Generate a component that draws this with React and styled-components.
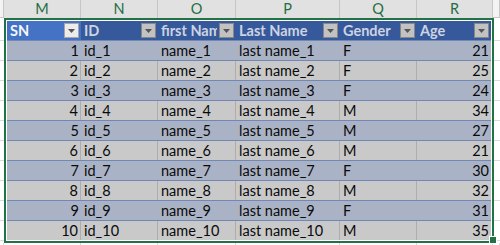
import React from 'react';
import styled, { createGlobalStyle } from 'styled-components';

const Global = createGlobalStyle`
  html, body { margin: 0; padding: 0; background: #ffffff; }
  body {
    width: 500px; height: 245px; overflow: hidden;
    font-family: Lato, "Open Sans", "Liberation Sans", sans-serif;
    font-size: 14px; color: #000;
  }
`;

const SHEET_COLS = [
  { letter: 'M', w: 77 },
  { letter: 'N', w: 77 },
  { letter: 'O', w: 78 },
  { letter: 'P', w: 104 },
  { letter: 'Q', w: 77 },
  { letter: 'R', w: 76 },
];

const FIELDS = [
  { label: 'SN', key: 'sn', right: true },
  { label: 'ID', key: 'id' },
  { label: 'first Name', key: 'first' },
  { label: 'Last Name', key: 'last' },
  { label: 'Gender', key: 'gender' },
  { label: 'Age', key: 'age', right: true },
];

const genders = ['F', 'F', 'F', 'M', 'M', 'M', 'F', 'M', 'F', 'M'];
const ages = [21, 25, 24, 34, 27, 21, 30, 32, 31, 35];
const ROWS = genders.map((g, i) => ({
  sn: i + 1,
  id: `id_${i + 1}`,
  first: `name_${i + 1}`,
  last: `last name_${i + 1}`,
  gender: g,
  age: ages[i],
}));

const TABLE_TEMPLATE = '74px 77px 78px 104px 77px 74px';
const SHEET_TEMPLATE = `4px ${SHEET_COLS.map((c) => c.w + 'px').join(' ')} 1fr`;

const Page = styled.div`
  display: flex;
  flex-direction: column;
  width: 500px;
  height: 245px;
`;

const ColHeaderRow = styled.div`
  display: grid;
  grid-template-columns: ${SHEET_TEMPLATE};
  height: 18px;
  flex: none;
`;

const ColHeaderCell = styled.div`
  box-sizing: border-box;
  height: 18px;
  display: flex;
  align-items: center;
  justify-content: center;
  background: ${(p) => (p.$selected ? '#e1e1e1' : '#f3f3f3')};
  border-right: 1px solid #c6c6c6;
  border-bottom: ${(p) => (p.$selected ? 'none' : '1px solid #c6c6c6')};
  color: #1f6e43;
  font-size: 14.5px;
  line-height: 18px;
`;

const Body = styled.div`
  display: flex;
  flex: none;
`;

const Gutter = styled.div`
  flex: ${(p) => (p.$grow ? '1' : 'none')};
  width: ${(p) => (p.$grow ? 'auto' : '4px')};
  background-image: repeating-linear-gradient(
    to bottom,
    transparent 0 19px,
    #dadada 19px 20px
  );
  background-position: 0 3px;
`;

const Selection = styled.div`
  position: relative;
  flex: none;
  width: 490px;
  box-sizing: border-box;
  border: 2px solid #217346;
  padding: 1px;
  background: #ffffff;
`;

const Handle = styled.div`
  position: absolute;
  right: -5px;
  bottom: -3px;
  width: 6px;
  height: 6px;
  background: #217346;
  border: 1px solid #ffffff;
  z-index: 2;
`;

const HeadRow = styled.div`
  display: grid;
  grid-template-columns: ${TABLE_TEMPLATE};
  height: 19px;
`;

const HeadCell = styled.div`
  display: flex;
  align-items: center;
  gap: 2px;
  min-width: 0;
  padding: 0 2px 0 3px;
  background: ${(p) => (p.$active ? '#4472c4' : '#36599b')};
  color: ${(p) => (p.$active ? '#f4f6fb' : '#cdd3e1')};
  font-weight: 700;
  font-size: 14.5px;
`;

const HeadText = styled.span`
  flex: 1;
  min-width: 0;
  overflow: hidden;
  white-space: nowrap;
  line-height: 19px;
`;

const DropButton = styled.span`
  flex: none;
  width: 15px;
  height: 15px;
  box-sizing: border-box;
  display: flex;
  align-items: center;
  justify-content: center;
  border: 1px solid ${(p) => (p.$active ? '#a6a6a6' : '#878787')};
  background: ${(p) => (p.$active ? '#ececec' : '#c2c2c2')};
`;

const DataRow = styled.div`
  display: grid;
  grid-template-columns: ${TABLE_TEMPLATE};
  height: 20px;
  box-sizing: border-box;
  border-top: 1px solid #6f88b5;
  background: ${(p) => (p.$band ? '#aab3c5' : '#c9c9c9')};
`;

const DataCell = styled.div`
  box-sizing: border-box;
  display: flex;
  align-items: center;
  justify-content: ${(p) => (p.$right ? 'flex-end' : 'flex-start')};
  padding: 0 ${(p) => (p.$right ? '2px' : '3px')};
  border-right: ${(p) => (p.$grid ? '1px solid #adadad' : 'none')};
  white-space: nowrap;
  overflow: hidden;
  color: #0a0a0a;
  font-size: 14.5px;
  line-height: 19px;
`;

const FillerRow = styled.div`
  display: grid;
  grid-template-columns: ${SHEET_TEMPLATE};
  flex: 1;
`;

const FillerCell = styled.div`
  box-sizing: border-box;
  border-right: 1px solid #dadada;
`;

const Triangle = () => (
  <svg width="7" height="4" viewBox="0 0 7 4">
    <polygon points="0,0 7,0 3.5,4" fill="#555555" />
  </svg>
);

export default function App() {
  return (
    <>
      <Global />
      <Page>
        <ColHeaderRow>
          <ColHeaderCell />
          {SHEET_COLS.map((c) => (
            <ColHeaderCell key={c.letter} $selected>
              {c.letter}
            </ColHeaderCell>
          ))}
          <ColHeaderCell />
        </ColHeaderRow>
        <Body>
          <Gutter />
          <Selection>
            <HeadRow>
              {FIELDS.map((f, i) => (
                <HeadCell key={f.key} $active={i === 0}>
                  <HeadText>{f.label}</HeadText>
                  <DropButton $active={i === 0}>
                    <Triangle />
                  </DropButton>
                </HeadCell>
              ))}
            </HeadRow>
            {ROWS.map((r, ri) => (
              <DataRow key={r.sn} $band={ri % 2 === 0}>
                {FIELDS.map((f, fi) => (
                  <DataCell
                    key={f.key}
                    $right={f.right}
                    $grid={ri % 2 === 1 && fi < FIELDS.length - 1}
                  >
                    {r[f.key]}
                  </DataCell>
                ))}
              </DataRow>
            ))}
            <Handle />
          </Selection>
          <Gutter $grow />
        </Body>
        <FillerRow>
          <FillerCell />
          {SHEET_COLS.map((c) => (
            <FillerCell key={c.letter} />
          ))}
          <FillerCell />
        </FillerRow>
      </Page>
    </>
  );
}
